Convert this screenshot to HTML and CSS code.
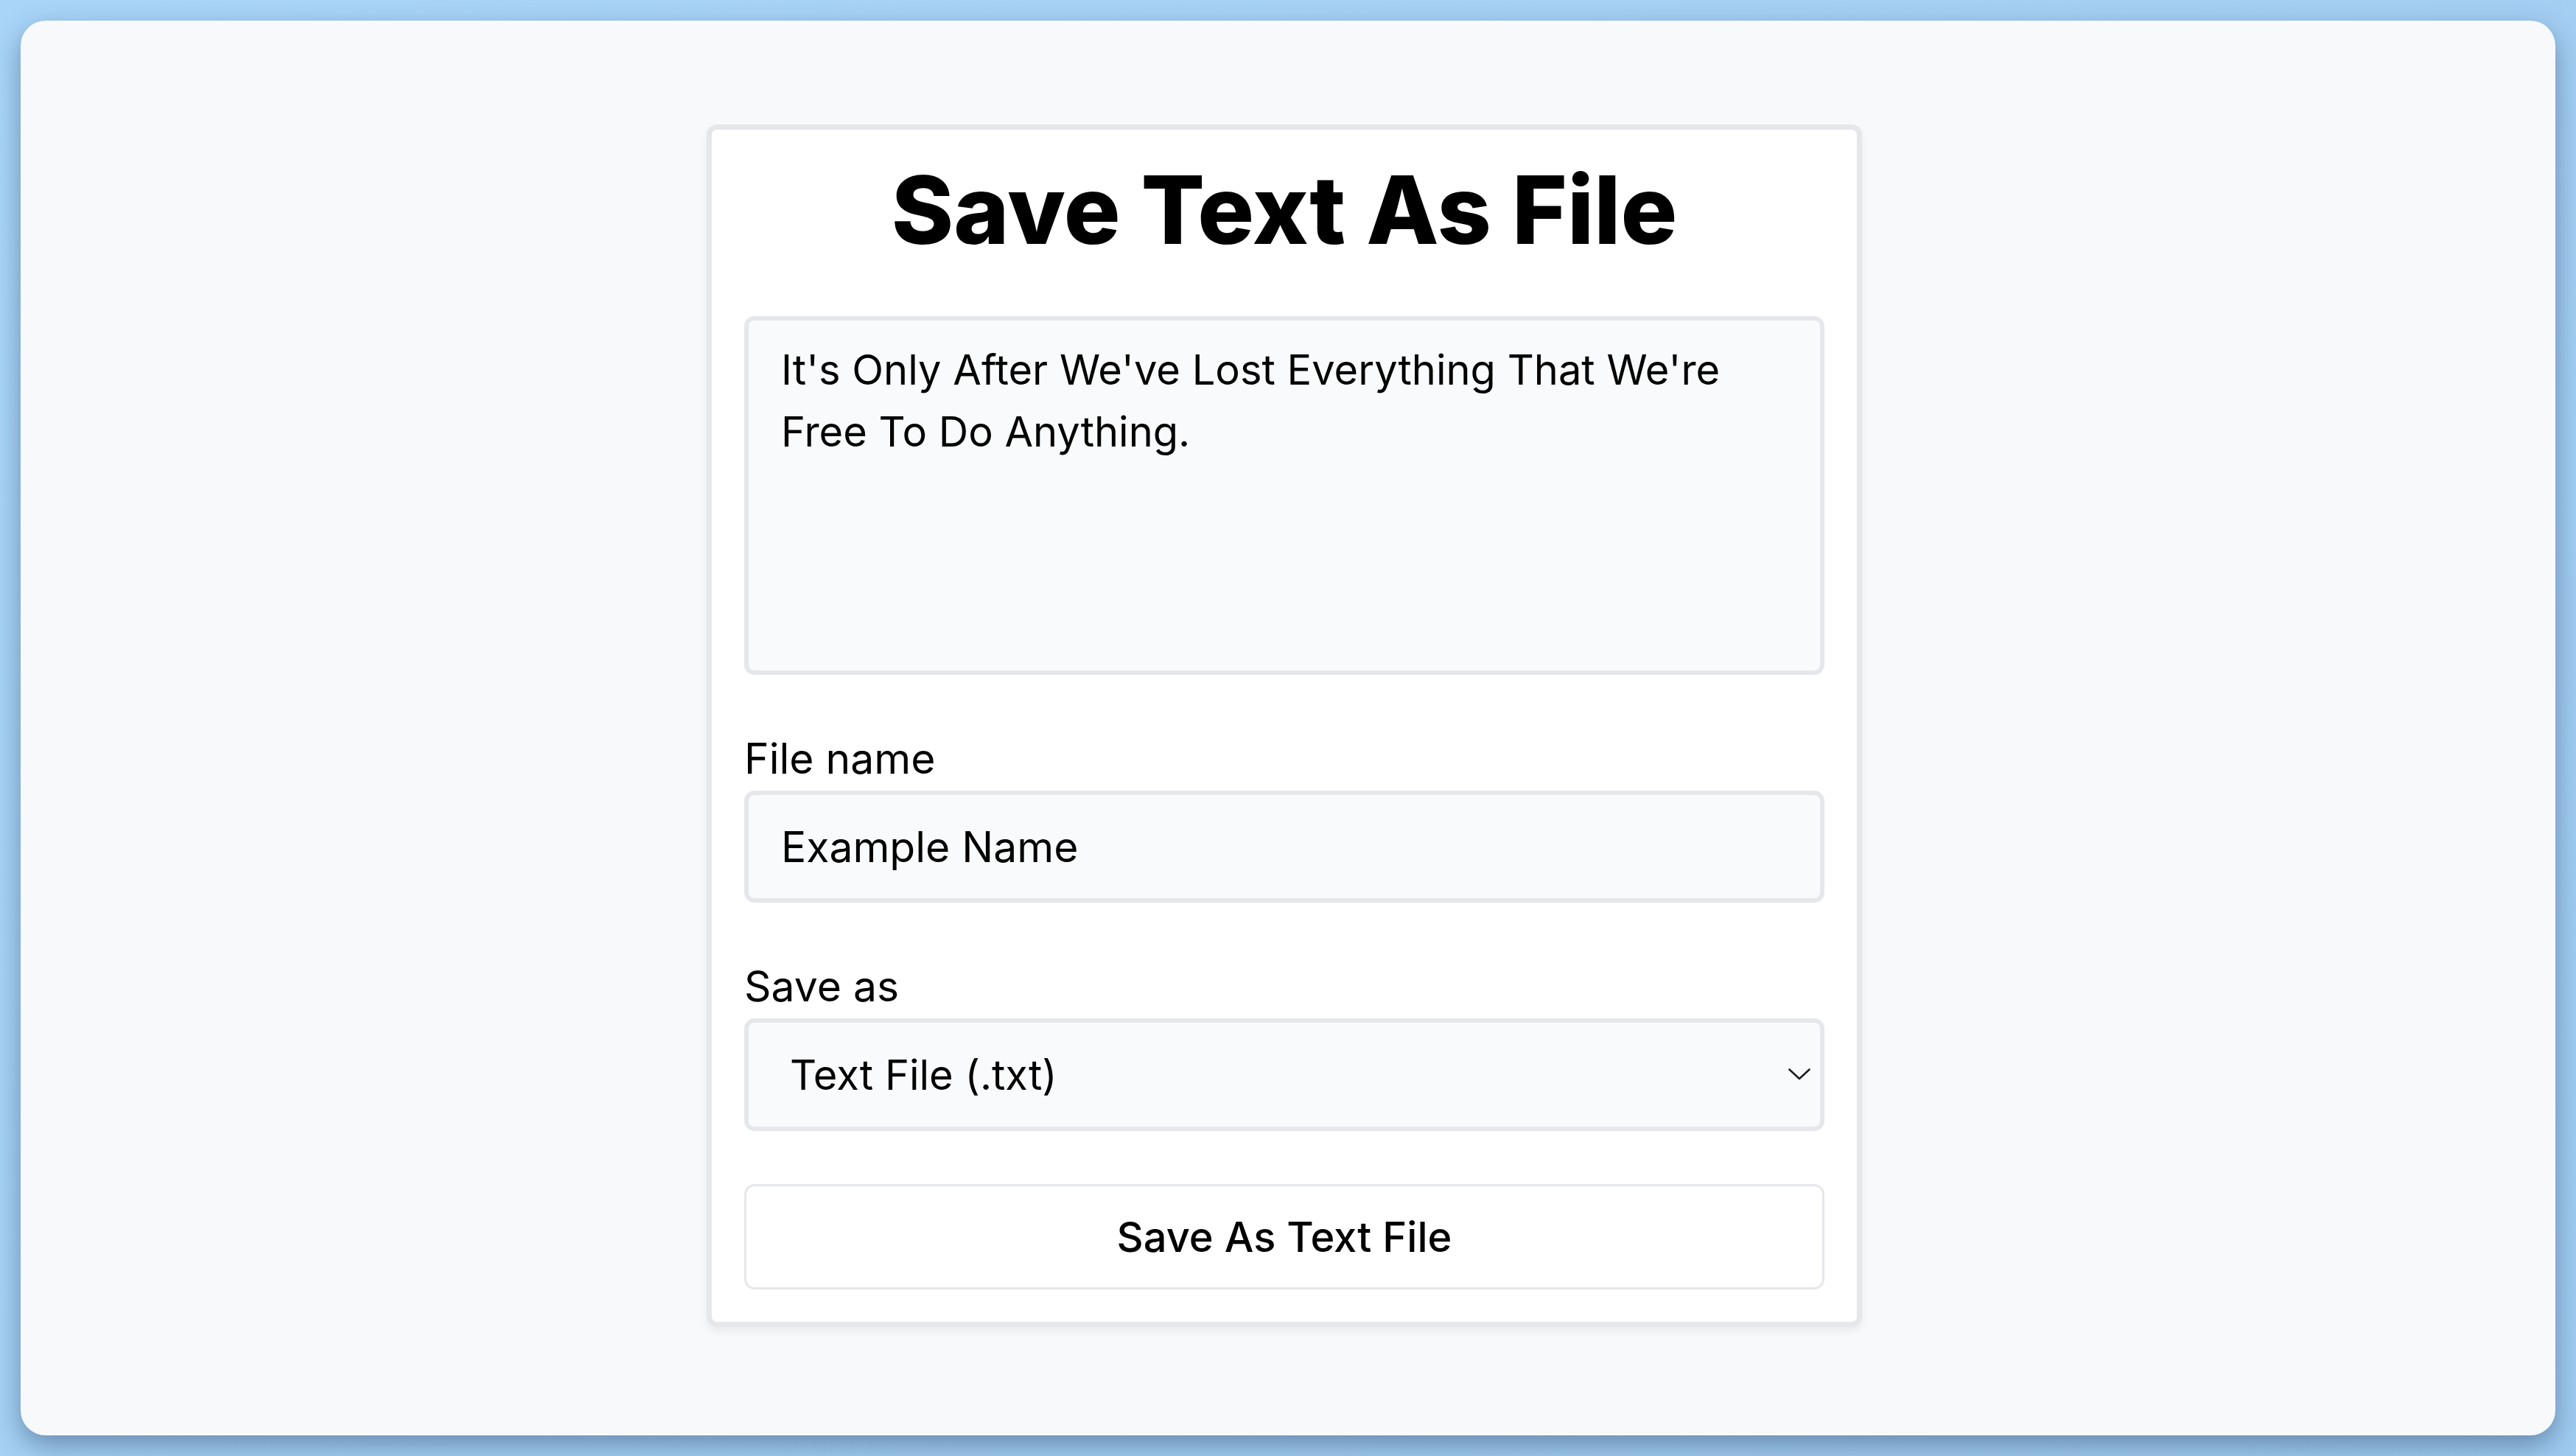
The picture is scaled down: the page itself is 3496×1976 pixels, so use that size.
FILE: index.html
```html
<!DOCTYPE html>
<html lang="en">
<head>
<meta charset="utf-8">
<title>Save Text As File</title>
<link rel="stylesheet" href="styles.css">
</head>
<body>
<div class="window">
  <div class="card">
    <h1 class="title">Save Text As File</h1>
    <textarea class="text-area" spellcheck="false">It's Only After We've Lost Everything That We're Free To Do Anything.</textarea>
    <div class="group">
      <label class="label" for="fname">File name</label>
      <input class="field" id="fname" type="text" value="Example Name" spellcheck="false">
    </div>
    <div class="group">
      <label class="label" for="ftype">Save as</label>
      <div class="select-wrap">
        <select class="field select" id="ftype">
          <option>Text File (.txt)</option>
          <option>JavaScript File (.js)</option>
          <option>HTML File (.html)</option>
          <option>CSS File (.css)</option>
        </select>
        <svg class="chevron" viewBox="0 0 30 16" width="30" height="16" aria-hidden="true"><path d="M1.5 1.5 L15 14 L28.5 1.5" fill="none" stroke="#1f1f1f" stroke-width="2.6" stroke-linecap="round" stroke-linejoin="round"/></svg>
      </div>
    </div>
    <button class="save-btn" type="button">Save As Text File</button>
  </div>
</div>
</body>
</html>
```
FILE: styles.css
```css
* {
  box-sizing: border-box;
}

html, body {
  margin: 0;
  padding: 0;
}

body {
  width: 3496px;
  height: 1976px;
  padding: 28px;
  background: linear-gradient(135deg, #a9d5f8 0%, #a4cff3 60%, #a0cbf0 100%);
  font-family: Inter, "Noto Sans", sans-serif;
  color: #000;
}

.window {
  height: 1920px;
  background: #f8f9fb;
  border-radius: 34px;
  box-shadow: 0 14px 36px rgba(30, 60, 95, 0.45);
  display: flex;
  justify-content: center;
  align-items: flex-start;
  padding-top: 141px;
  padding-right: 10px;
}

.card {
  width: 1568px;
  background: #fff;
  border: 7px solid #e6e7ea;
  border-radius: 14px;
  padding: 44px;
  display: flex;
  flex-direction: column;
  box-shadow: 0 6px 12px rgba(0, 0, 0, 0.06);
}

.title {
  margin: 0 0 79px;
  font-size: 128px;
  line-height: 130px;
  font-weight: 800;
  text-align: center;
  letter-spacing: 0;
}

.text-area {
  display: block;
  width: 100%;
  height: 487px;
  margin: 0;
  padding: 25px 44px;
  border: 6px solid #e5e7eb;
  border-radius: 14px;
  background: #f9fafb;
  font-family: inherit;
  font-size: 56px;
  line-height: 84px;
  color: #000;
  resize: none;
  outline: none;
}

.group {
  margin-top: 72px;
  display: flex;
  flex-direction: column;
  gap: 1px;
}

.label {
  font-size: 57px;
  line-height: 84px;
}

.field {
  display: block;
  width: 100%;
  height: 152px;
  margin: 0;
  padding: 0 44px;
  border: 6px solid #e5e7eb;
  border-radius: 14px;
  background: #f9fafb;
  font-family: inherit;
  font-size: 57px;
  color: #000;
  outline: none;
}

.select-wrap {
  position: relative;
}

.select {
  height: 153px;
  padding-left: 56px;
  font-size: 56px;
  -webkit-appearance: none;
  appearance: none;
}

.chevron {
  position: absolute;
  right: 19px;
  top: 68px;
  pointer-events: none;
}

.save-btn {
  margin-top: 72px;
  height: 143px;
  width: 100%;
  border: 3px solid #e5e7eb;
  border-radius: 14px;
  background: #fff;
  font-family: inherit;
  font-size: 56px;
  font-weight: 500;
  color: #000;
}
```
